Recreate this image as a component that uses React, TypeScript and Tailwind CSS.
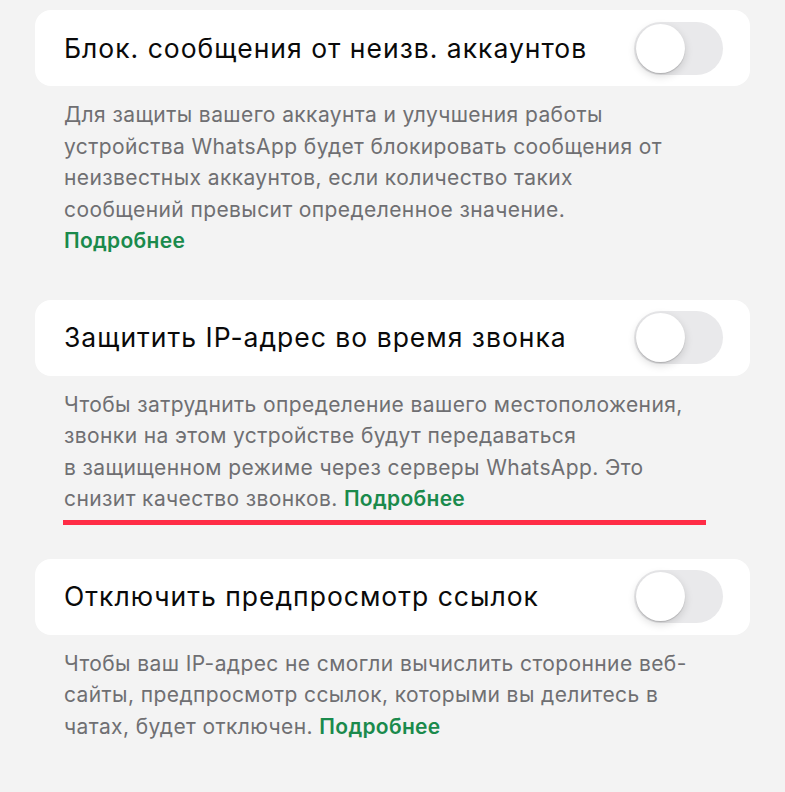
import React from "react";

const font = { fontFamily: "Inter, 'Noto Sans', sans-serif" };

function Toggle() {
  return (
    <div className="relative h-[53px] w-[89px] shrink-0 rounded-full bg-[#e9e9eb]">
      <div className="absolute left-[2px] top-[2px] h-[49px] w-[49px] rounded-full bg-white shadow-[0_3px_8px_rgba(0,0,0,0.15),0_1px_1px_rgba(0,0,0,0.16)]" />
    </div>
  );
}

function Card({ title }: { title: string }) {
  return (
    <div className="flex h-[76px] items-center justify-between rounded-[16px] bg-white pl-[29px] pr-[27px]">
      <span className="text-[26.5px] leading-none text-[#0a0a0a] tracking-[1px]">{title}</span>
      <Toggle />
    </div>
  );
}

function Link() {
  return <span className="font-semibold text-[#1a8a4c] tracking-[0.3px]">Подробнее</span>;
}

const desc = "whitespace-nowrap px-[29px] text-[21px] leading-[31.5px] tracking-[0.4px] text-[#6f6f72]";

export default function App() {
  return (
    <div className="min-h-[792px] w-[785px] bg-[#f3f3f3] px-[35px] pt-[10px]" style={font}>
      <Card title="Блок. сообщения от неизв. аккаунтов" />
      <p className={"mt-[13px] " + desc}>
        Для защиты вашего аккаунта и улучшения работы
        <br />
        устройства WhatsApp будет блокировать сообщения от
        <br />
        неизвестных аккаунтов, если количество таких
        <br />
        сообщений превысит определенное значение.
        <br />
        <Link />
      </p>

      <div className="mt-[43px]">
        <Card title="Защитить IP-адрес во время звонка" />
      </div>
      <p className={"mt-[13px] " + desc}>
        Чтобы затруднить определение вашего местоположения,
        <br />
        звонки на этом устройстве будут передаваться
        <br />
        в защищенном режиме через серверы WhatsApp. Это
        <br />
        снизит качество звонков. <Link />
      </p>
      <div className="ml-[28px] mt-[5px] h-[5px] w-[643px] bg-[#ff2c46]" />

      <div className="mt-[34px]">
        <Card title="Отключить предпросмотр ссылок" />
      </div>
      <p className={"mt-[13px] " + desc}>
        Чтобы ваш IP-адрес не смогли вычислить сторонние веб-
        <br />
        сайты, предпросмотр ссылок, которыми вы делитесь в
        <br />
        чатах, будет отключен. <Link />
      </p>
    </div>
  );
}
